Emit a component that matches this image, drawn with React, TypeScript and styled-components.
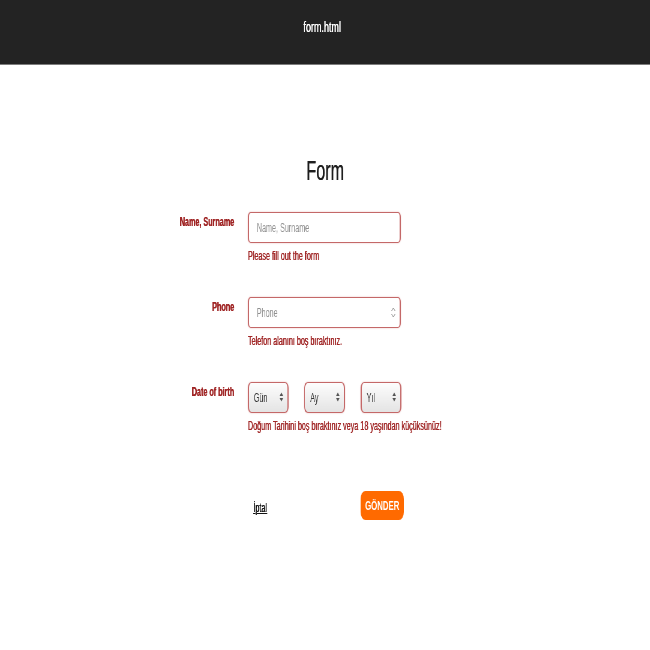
import styled, { createGlobalStyle } from 'styled-components';

// the reference is a wide page squeezed to 650px across, so the page is laid out
// at 1083px and squeezed back horizontally
const SQUEEZE = 0.6;

const GlobalStyle = createGlobalStyle`
  body {
    margin: 0;
    background: #fff;
    overflow-x: hidden;
    font-family: "Liberation Sans", Arial, Helvetica, sans-serif;
  }
`;

const SelectArrows = () => (
  <svg width="8" height="10" viewBox="0 0 8 10">
    <path d="M4 0.5 L7 4 L1 4 Z" fill="#555" />
    <path d="M4 9.5 L7 6 L1 6 Z" fill="#555" />
  </svg>
);

const SpinArrows = () => (
  <svg width="9" height="11" viewBox="0 0 9 11">
    <path d="M1.5 4 L4.5 1 L7.5 4" stroke="#777" strokeWidth="1" fill="none" />
    <path d="M1.5 7 L4.5 10 L7.5 7" stroke="#777" strokeWidth="1" fill="none" />
  </svg>
);

type SelectProps = { label: string };

const DateSelect = ({ label }: SelectProps) => (
  <SelectWrap>
    <Select defaultValue="">
      <option value="">{label}</option>
    </Select>
    <Overlay>
      <SelectArrows />
    </Overlay>
  </SelectWrap>
);

export default function App() {
  return (
    <>
      <GlobalStyle />
      <Page>
        <Header>form.html</Header>
        <Main>
          <Title>Form</Title>
          <Row>
            <Label>Name, Surname</Label>
            <Field>
              <Input placeholder="Name, Surname" />
              <Error>Please fill out the form</Error>
            </Field>
          </Row>
          <Row>
            <Label>Phone</Label>
            <Field>
              <InputWrap>
                <Input placeholder="Phone" />
                <Overlay>
                  <SpinArrows />
                </Overlay>
              </InputWrap>
              <Error>Telefon alanını boş bıraktınız.</Error>
            </Field>
          </Row>
          <Row>
            <Label>Date of birth</Label>
            <Field>
              <Selects>
                <DateSelect label="Gün" />
                <DateSelect label="Ay" />
                <DateSelect label="Yıl" />
              </Selects>
              <Error>Doğum Tarihini boş bıraktınız veya 18 yaşından küçüksünüz!</Error>
            </Field>
          </Row>
          <Actions>
            <span />
            <ActionBar>
              <CancelLink href="#">İptal</CancelLink>
              <SubmitButton type="button">GÖNDER</SubmitButton>
            </ActionBar>
          </Actions>
        </Main>
      </Page>
    </>
  );
}

const Page = styled.div`
  width: ${650 / SQUEEZE}px;
  transform: scaleX(${SQUEEZE});
  transform-origin: left top;
  will-change: transform;
  text-shadow: 0.6px 0 0 currentColor;
`;

const Header = styled.header`
  height: 46px;
  padding: 18px 10px 0 0;
  background: #232323;
  border-bottom: 1px solid #7d7d7d;
  color: #fff;
  font-size: 15px;
  line-height: 18px;
  text-align: center;
`;

const Main = styled.main`
  padding-top: 90px;
`;

const Title = styled.h1`
  margin: 0 0 25px;
  font-size: 27px;
  font-weight: normal;
  line-height: 32px;
  color: #1e1e1e;
  text-align: center;
`;

const Row = styled.div`
  display: grid;
  grid-template-columns: 390px 255px;
  column-gap: 23px;
  margin-bottom: 34px;
`;

const Label = styled.label`
  padding-top: 3px;
  font-size: 12px;
  font-weight: bold;
  line-height: 14px;
  color: #9f2424;
  text-align: right;
`;

const Field = styled.div`
  display: flex;
  flex-direction: column;
`;

const InputWrap = styled.div`
  position: relative;
`;

const Input = styled.input`
  box-sizing: border-box;
  width: 255px;
  height: 31px;
  padding: 0 13px;
  border: 1px solid #c46868;
  border-left-width: 2px;
  border-right-width: 2px;
  border-radius: 5px;
  box-shadow: 0 0 2px rgba(190, 60, 60, 0.35);
  font-family: inherit;
  font-size: 12px;
  outline: none;

  &::placeholder {
    color: #8f8f8f;
  }
`;

const Overlay = styled.span`
  position: absolute;
  right: 8px;
  top: 10px;
  line-height: 0;
  pointer-events: none;
`;

const Error = styled.div`
  margin-top: 6px;
  font-size: 12px;
  line-height: 14px;
  color: #a12828;
  white-space: nowrap;
`;

const Selects = styled.div`
  display: flex;
  gap: 26px;
`;

const SelectWrap = styled.div`
  position: relative;
  width: 68px;
`;

const Select = styled.select`
  box-sizing: border-box;
  width: 68px;
  height: 31px;
  padding: 0 8px;
  border: 1px solid #c46868;
  border-left-width: 2px;
  border-right-width: 2px;
  border-radius: 6px;
  background: linear-gradient(#fdfdfd, #e4e4e4);
  box-shadow: 0 0 2px rgba(190, 60, 60, 0.35);
  appearance: none;
  font-family: inherit;
  font-size: 12px;
  color: #333;
  outline: none;
`;

const Actions = styled.div`
  display: grid;
  grid-template-columns: 390px 260px;
  column-gap: 23px;
  margin-top: 58px;
`;

const ActionBar = styled.div`
  display: flex;
  align-items: center;
  justify-content: space-between;
  padding-left: 9px;
`;

const CancelLink = styled.a`
  margin-top: 4px;
  font-size: 12px;
  color: #111;
  text-decoration: underline;
`;

const SubmitButton = styled.button`
  width: 72px;
  height: 29px;
  padding: 0;
  border: none;
  border-radius: 8px;
  background: #ff6a00;
  color: #fff;
  font-family: inherit;
  font-size: 13px;
  font-weight: bold;
`;
